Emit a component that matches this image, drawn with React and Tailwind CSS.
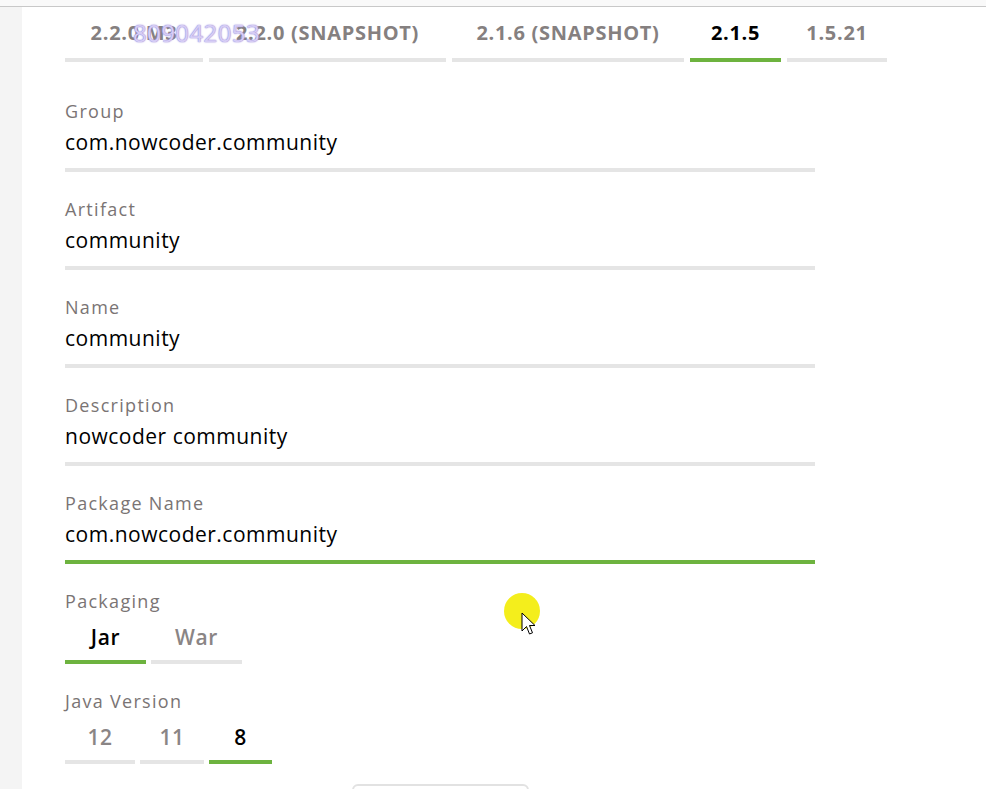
import { useState } from 'react';

const versions = [
  { label: '2.2.0 M3', w: 'w-[138px]' },
  { label: '2.2.0 (SNAPSHOT)', w: 'w-[237px]' },
  { label: '2.1.6 (SNAPSHOT)', w: 'w-[232px]' },
  { label: '2.1.5', w: 'w-[91px]' },
  { label: '1.5.21', w: 'w-[100px]' },
];

const fields = [
  { label: 'Group', value: 'com.nowcoder.community' },
  { label: 'Artifact', value: 'community' },
  { label: 'Name', value: 'community' },
  { label: 'Description', value: 'nowcoder community' },
  { label: 'Package Name', value: 'com.nowcoder.community' },
];

const labelCls = 'text-[18px] leading-[24px] tracking-[1.3px] text-[#7a7474]';

function Radio({ items, value, onChange }) {
  return (
    <div className="flex gap-[5px] mt-[10px]">
      {items.map((it) => (
        <button
          key={it.label}
          onClick={() => onChange(it.label)}
          className={`${it.w} pb-[9px] text-[21px] leading-[28px] font-semibold tracking-[0.6px] border-b-4 ${
            value === it.label ? 'text-black border-[#6db33f]' : 'text-[#8a8585] border-[#e5e5e5]'
          }`}
        >
          {it.label}
        </button>
      ))}
    </div>
  );
}

function Field({ label, value, focused }) {
  return (
    <div className="w-[750px] mt-[25px] first:mt-0">
      <div className={labelCls}>{label}</div>
      <input
        defaultValue={value}
        className={`block w-full mt-[4px] pb-[11px] text-[21px] leading-[30px] text-black tracking-[0.5px] outline-none border-b-4 ${
          focused ? 'border-[#6db33f]' : 'border-[#e5e5e5]'
        }`}
      />
    </div>
  );
}

export default function App() {
  const [boot, setBoot] = useState('2.1.5');
  const [pack, setPack] = useState('Jar');
  const [java, setJava] = useState('8');

  return (
    <div className="relative min-h-[789px] bg-white font-['Open_Sans',sans-serif]">
      <div className="h-[7px] bg-[#f9f9f9] border-b border-[#c8c8c8]" />
      <div className="flex">
        <div className="w-[22px] shrink-0 bg-[#f4f4f4]" />
        <main className="pl-[43px] pb-10">
          <div className="relative flex gap-[6px] pt-[12px]">
            {versions.map((v) => (
              <button
                key={v.label}
                onClick={() => setBoot(v.label)}
                className={`${v.w} pb-[11px] text-[20px] leading-[28px] font-bold tracking-[0.7px] border-b-4 ${
                  boot === v.label ? 'text-black border-[#6db33f]' : 'text-[#858080] border-[#e5e5e5]'
                }`}
              >
                {v.label}
              </button>
            ))}
            {/* video watermark */}
            <span className="absolute left-[68px] top-[13px] text-[24px] leading-[26px] tracking-[0.4px] text-[#d6cdf5] [text-shadow:0_0_1px_#8f7fd6,0_0_2px_#a99ae2]">
              809042053
            </span>
          </div>

          <div className="mt-[37px]">
            {fields.map((f) => (
              <Field key={f.label} {...f} focused={f.label === 'Package Name'} />
            ))}
          </div>

          <div className="mt-[25px]">
            <div className={labelCls}>Packaging</div>
            <Radio
              items={[
                { label: 'Jar', w: 'w-[81px]' },
                { label: 'War', w: 'w-[91px]' },
              ]}
              value={pack}
              onChange={setPack}
            />
          </div>

          <div className="mt-[25px]">
            <div className={labelCls}>Java Version</div>
            <Radio
              items={[
                { label: '12', w: 'w-[70px]' },
                { label: '11', w: 'w-[64px]' },
                { label: '8', w: 'w-[63px]' },
              ]}
              value={java}
              onChange={setJava}
            />
          </div>

          <div className="w-[750px] flex justify-center mt-[20px]">
            <div className="w-[177px] h-[44px] rounded-md border-2 border-[#e2e2e2]" />
          </div>
        </main>
      </div>

      {/* cursor highlight */}
      <div className="absolute left-[504px] top-[593px] w-[36px] h-[36px] rounded-full bg-[#f4ee1c]" />
      <svg className="absolute left-[521px] top-[612px]" width="16" height="26" viewBox="0 0 16 26">
        <path d="M1 1 L1 19 L5.5 14.5 L8.5 22 L11.5 20.8 L8.5 13.5 L14 13.5 Z" fill="#fff" stroke="#000" strokeWidth="1" strokeLinejoin="round" />
      </svg>
    </div>
  );
}
